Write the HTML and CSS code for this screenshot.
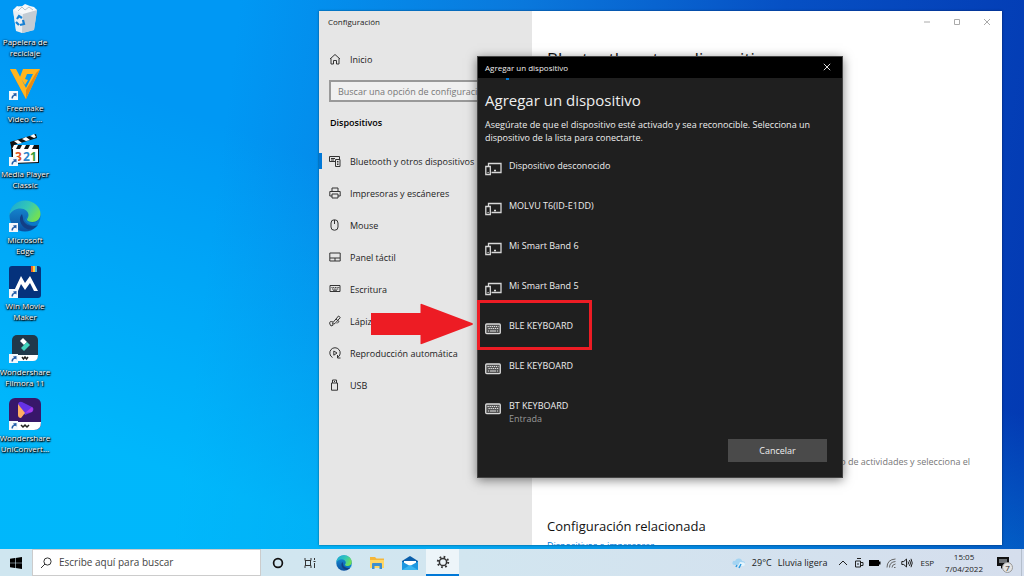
FILE: index.html
```html
<!DOCTYPE html>
<html lang="es">
<head>
  <meta charset="utf-8">
  <title>Agregar un dispositivo</title>
  <link rel="stylesheet" href="styles.css">
</head>
<body>
  <!-- Iconos que se repiten -->
  <svg class="defs" aria-hidden="true">
    <symbol id="acceso" viewBox="0 0 9 9">
      <path d="M0 0h9v9H0z" fill="#f4f8fc"/>
      <path d="M2.500 7.500C2.300 5.500 3.200 4.200 5 4L4 2.500l3.500-.5V5.500L6.300 4.800C4.700 5 4 6 4 7.500z" fill="#225ca8"/>
    </symbol>
    <symbol id="edge" viewBox="0 0 32 32">
      <linearGradient id="edgeVerde" x1="0" y1="0" x2="1" y2=".5">
        <stop offset="0" stop-color="#16a5da"/><stop offset=".6" stop-color="#35c8b5"/><stop offset="1" stop-color="#70df58"/>
      </linearGradient>
      <linearGradient id="edgeAzul" x1="0" y1="0" x2="0" y2="1">
        <stop offset="0" stop-color="#1795dc"/><stop offset="1" stop-color="#0b4f9f"/>
      </linearGradient>
      <circle cx="16" cy="16" r="15.500" fill="url(#edgeAzul)"/>
      <path d="M.5 15C1 6 8 .5 16 .5 25 .5 31.500 7 31.500 14c0 5-4 8-8 8-3.500 0-5.500-1-5.500-2.500 0-1 1.500-2 1.500-4.500 0-3.500-3.500-6.500-8-6.500-5 0-9 2.500-11 6.500z" fill="url(#edgeVerde)"/>
      <path d="M13 14c-4 4-2 12 5 15 4 1.500 8-.5 11-4-6 3-15 0-15-7z" fill="#123f86"/>
      <path d="M19 15c0 2-1.500 3.500-1.500 4.500 0 2 3 3 6 3 4 0 7.500-2.500 8.500-6L31 25c-5 2-13 0-15-5z" fill="#00a8f8" opacity=".35"/>
    </symbol>
    <symbol id="dispositivo" viewBox="0 0 17 14">
      <path d="M3.500 4V1.500h12.500v9H6.500M9 8.500h2" fill="none" stroke="#d8d8d8" stroke-width="1.300"/>
      <path d="M.8 4.500h4.500v8H.8z" fill="#1f1f1f" stroke="#d8d8d8" stroke-width="1.300"/>
      <path d="M2.500 10.500h1.200" stroke="#d8d8d8"/>
    </symbol>
    <symbol id="teclado" viewBox="0 0 17 14">
      <rect x=".7" y="2" width="14.600" height="9.600" rx="1" fill="#555" stroke="#d8d8d8" stroke-width="1.300"/>
      <path d="M2.500 4.500h11M3.500 6.500h10" stroke="#e0e0e0" stroke-width="1.200" stroke-dasharray="1.300 .8"/>
      <path d="M3 9h1M5 9h6M12 9h1" stroke="#e0e0e0"/>
    </symbol>
  </svg>

  <main class="desktop">
    <div class="shortcuts">
      <a class="shortcut" href="#">
        <svg viewBox="0 0 32 32">
          <path d="M4 8l7-4 8 1 9 3-3 20-11 3-7-3z" fill="#d3dbe2"/>
          <path d="M4 8l10 3-1 20-6-2z" fill="#e9eef2"/>
          <path d="M14 11l14-3-3 20-12 3z" fill="#c3ccd4"/>
          <path d="M4 8l4-4 4 1 4-3 5 2 4 1 3 3-14 4z" fill="#f6f8fa"/>
          <path d="M9 9l4-4 3 3 4-3 4 3" fill="none" stroke="#b8c2ca"/>
          <path d="M8 17l2-3 3 2M14 18l1 4-4 1M10 23l-3-3" fill="none" stroke="#1680d4" stroke-width="2.200"/>
        </svg>
        <span>Papelera de reciclaje</span>
      </a>
      <a class="shortcut" href="#">
        <svg viewBox="0 0 32 32">
          <path d="M1 1h5l12 22-1 8z" fill="#f07f18"/>
          <path d="M1 1h6l10 19 7-14h-6l-2 5 3 1-3 5-5-8 3-8h17L17 31z" fill="#ffb51f"/>
          <path d="M31 1L17 31v-9L27 5z" fill="#e88a12"/>
          <use href="#acceso" x="0" y="23" width="9" height="9"/>
        </svg>
        <span>Freemake Video C...</span>
      </a>
      <a class="shortcut" href="#">
        <svg viewBox="0 0 32 32">
          <path d="M1 8L27 0l1 4L2 12z" fill="#111"/>
          <path d="M5 7l4 3 4-1-4-3zM13 5l4 2 4-1-4-3zM21 2l4 2 2-1-2-3z" fill="#fff"/>
          <path d="M2 11h28v18L3 30z" fill="#111"/>
          <path d="M4 15h25v13L4 29z" fill="#fff"/>
          <path d="M5 11l-2 4h4l2-4zM13 11l-2 4h4l2-4zM21 11l-2 4h4l2-4z" fill="#fff"/>
          <text class="n321" y="27"><tspan x="6" fill="#df5520">3</tspan><tspan x="14" fill="#2c85cc">2</tspan><tspan x="21" fill="#359a35">1</tspan></text>
          <use href="#acceso" x="0" y="23" width="9" height="9"/>
        </svg>
        <span>Media Player Classic</span>
      </a>
      <a class="shortcut" href="#">
        <svg viewBox="0 0 32 32">
          <use href="#edge" width="32" height="32"/>
          <use href="#acceso" x="0" y="23" width="9" height="9"/>
        </svg>
        <span>Microsoft Edge</span>
      </a>
      <a class="shortcut" href="#">
        <svg viewBox="0 0 32 32">
          <rect width="32" height="32" rx="3" fill="#05327c"/>
          <path d="M22 0h2v6h-2z" fill="#f0602a"/><path d="M24 0h2v6h-2z" fill="#ffcd38"/><path d="M26 0h2v6h-2z" fill="#4fb6d8"/>
          <path d="M5 25l7-15 4 7 5-7 8 15h-4l-4-8-5 7-4-6-3 7z" fill="#fff"/>
          <use href="#acceso" x="0" y="23" width="9" height="9"/>
        </svg>
        <span>Win Movie Maker</span>
      </a>
      <a class="shortcut" href="#">
        <svg viewBox="0 0 32 32">
          <rect x="3" y="3" width="26" height="26" rx="5" fill="#20384a"/>
          <path d="M3 23h26q0 6-5 6H8q-5 0-5-6z" fill="#fff"/>
          <path d="M11 9l3-3 4 4-3 3z" fill="#fff"/>
          <path d="M12 16l6-6 3 3-6 6z" fill="#43d4bd"/>
          <path d="M13 25l1.500 2 1.500-2 1.500 2 1.500-2" fill="none" stroke="#222" stroke-width="1.500"/>
          <use href="#acceso" x="0" y="22" width="9" height="9"/>
        </svg>
        <span>Wondershare Filmora 11</span>
      </a>
      <a class="shortcut" href="#">
        <svg viewBox="0 0 32 32">
          <rect width="32" height="32" rx="6" fill="#38176a"/>
          <path d="M0 24h32q0 8-7 8H0z" fill="#fff"/>
          <path d="M9 6q1-3 4-2l10 5q3 2 0 5l-7 3z" fill="#6632e5"/>
          <path d="M16 15l7-6q2 2 0 5z" fill="#a83be8"/>
          <path d="M9 6l7 9-4 5q-3 0-3-3z" fill="#ffae63"/>
          <path d="M12 27l2 2 2-2 2 2 2-2" fill="none" stroke="#222" stroke-width="1.500"/>
          <use href="#acceso" x="0" y="23" width="9" height="9"/>
        </svg>
        <span>Wondershare UniConvert...</span>
      </a>
    </div>

    <!-- Ventana de Configuración -->
    <section class="settings">
      <aside class="sidebar">
        <div class="settings-title">Configuración</div>
        <a class="nav-item" href="#">
          <svg viewBox="0 0 12 12"><path d="M1 6l5-4.500L11 6M2 5.500V11h2.500V7.500h3V11H10V5.500"/></svg>
          Inicio
        </a>
        <input class="search" type="text" placeholder="Buscar una opción de configuración" aria-label="Buscar una opción de configuración">
        <h2>Dispositivos</h2>
        <nav>
          <a class="nav-item active" href="#">
            <svg viewBox="0 0 12 12"><path d="M6 6.500H.5v-5h10V4M2 3.500h4M2 5h3M6.500 4.500h4.500v7H6.500zM8 6.500h1.500M8 8h1.500M8 9.500h1.500"/></svg>
            Bluetooth y otros dispositivos
          </a>
          <a class="nav-item" href="#">
            <svg viewBox="0 0 12 12"><path d="M3 4.500V1h6v3.500M3 9H.8V4.500h10.400V9H9M3 7h6v4H3z"/></svg>
            Impresoras y escáneres
          </a>
          <a class="nav-item" href="#">
            <svg viewBox="0 0 12 12"><rect x="2" y=".8" width="7" height="10.400" rx="3.200"/><path d="M5.500 1v4"/></svg>
            Mouse
          </a>
          <a class="nav-item" href="#">
            <svg viewBox="0 0 12 12"><path d="M.8 2h10.400v8H.8zM1 7h10M6 7v3"/></svg>
            Panel táctil
          </a>
          <a class="nav-item" href="#">
            <svg viewBox="0 0 12 12"><path d="M1 2.500h10v6H1z"/><path d="M2.500 4.500h8M3 6h7" stroke-dasharray="1 .7"/><path d="M4 7.200h4"/></svg>
            Escritura
          </a>
          <a class="nav-item" href="#">
            <svg viewBox="0 0 12 12"><path d="M4 7.500L9.500 1l1.800 1.500L6 8.500l-2.500.8zM4 7Q0 5.500.8 9t3.500 1M7 4l3 2.500-2 2"/></svg>
            Lápiz y Windows Ink
          </a>
          <a class="nav-item" href="#">
            <svg viewBox="0 0 12 12"><path d="M3.500 10.500a5.200 5.200 0 1 1 5 0M8.500 8v3h3M4.800 4v4.200L8 6z"/></svg>
            Reproducción automática
          </a>
          <a class="nav-item" href="#">
            <svg viewBox="0 0 12 12"><path d="M2.500 4h6v7.200h-6zM3.500 4V1h4v3M5 2.500h1"/></svg>
            USB
          </a>
        </nav>
      </aside>
      <div class="content">
        <div class="window-buttons">
          <button aria-label="Minimizar"><svg viewBox="0 0 8 8"><path d="M1 4h6"/></svg></button>
          <button aria-label="Maximizar"><svg viewBox="0 0 8 8"><path d="M1.500 1.500h5v5h-5z"/></svg></button>
          <button aria-label="Cerrar"><svg viewBox="0 0 8 8"><path d="M1 1l6 6M7 1L1 7"/></svg></button>
        </div>
        <h1>Bluetooth y otros dispositivos</h1>
        <div class="related">
          <p>Para activar o desactivar Bluetooth sin abrir Configuración, abre Centro de actividades y selecciona el icono Bluetooth.</p>
          <h3>Configuración relacionada</h3>
          <a href="#">Dispositivos e impresoras</a>
        </div>
      </div>
    </section>

    <!-- Cuadro para agregar el dispositivo -->
    <section class="dialog" role="dialog" aria-labelledby="titulo">
      <div class="dialog-bar">
        <span>Agregar un dispositivo</span>
        <button aria-label="Cerrar"><svg viewBox="0 0 8 8"><path d="M.8.8l6.400 6.400M7.200.8L.8 7.200"/></svg></button>
      </div>
      <div class="progress"></div>
      <div class="dialog-body">
        <h2 id="titulo">Agregar un dispositivo</h2>
        <p>Asegúrate de que el dispositivo esté activado y sea reconocible. Selecciona un dispositivo de la lista para conectarte.</p>
        <div class="devices">
          <button class="device"><svg><use href="#dispositivo"/></svg><span>Dispositivo desconocido</span></button>
          <button class="device"><svg><use href="#dispositivo"/></svg><span>MOLVU T6(ID-E1DD)</span></button>
          <button class="device"><svg><use href="#dispositivo"/></svg><span>Mi Smart Band 6</span></button>
          <button class="device"><svg><use href="#dispositivo"/></svg><span>Mi Smart Band 5</span></button>
          <button class="device marked"><svg><use href="#teclado"/></svg><span>BLE KEYBOARD</span></button>
          <button class="device"><svg><use href="#teclado"/></svg><span>BLE KEYBOARD</span></button>
          <button class="device"><svg><use href="#teclado"/></svg><span>BT KEYBOARD<small>Entrada</small></span></button>
        </div>
        <button class="cancel">Cancelar</button>
      </div>
    </section>

    <svg class="arrow" viewBox="0 0 103 42"><path d="M0 10h50V1q0-1 2 0l50 19q2 1 0 2L52 41q-2 1-2 0v-9H0z" fill="#ed1c24"/></svg>
  </main>

  <footer class="taskbar">
    <button class="start" aria-label="Inicio">
      <svg viewBox="0 0 12 12"><path d="M0 1.800l5-.7v4.600H0zM5.600 1L12 0v5.700H5.600zM0 6.300h5v4.600l-5-.7zM5.600 6.300H12V12l-6.400-1z" fill="#000"/></svg>
    </button>
    <label class="task-search">
      <svg viewBox="0 0 12 12"><circle cx="7.500" cy="4.500" r="3.600"/><path d="M5 7L1 11"/></svg>
      <input type="text" placeholder="Escribe aquí para buscar" aria-label="Escribe aquí para buscar">
    </label>
    <button class="task" aria-label="Cortana"><svg viewBox="0 0 16 16"><circle cx="8" cy="8" r="4.400" fill="none" stroke="#111" stroke-width="1.700"/></svg></button>
    <button class="task" aria-label="Vista de tareas"><svg viewBox="0 0 16 16"><path d="M2 3v2.500h6V3M2 13v-2.500h6V13M2.500 5.500v5M7.500 5.500v5M11.500 3v2M11.500 8v5M10.500 6.500h2" fill="none" stroke="#333"/></svg></button>
    <button class="task" aria-label="Microsoft Edge"><svg><use href="#edge"/></svg></button>
    <button class="task" aria-label="Explorador de archivos">
      <svg viewBox="0 0 16 16"><path d="M1 2h5l1.500 1.500H15V13H1z" fill="#f5b73a"/><path d="M1 5h14v8H1z" fill="#ffd766"/><path d="M3 14V9q0-1 1-1h8q1 0 1 1v5h-2.500v-3h-5v3z" fill="#3d8fd0"/></svg>
    </button>
    <button class="task" aria-label="Correo">
      <svg viewBox="0 0 16 16"><path d="M0 6l8-5 8 5v9H0z" fill="#0b5faa"/><path d="M2 6h12v5H2z" fill="#fff"/><path d="M0 6.500l8 4.500 8-4.500V15H0z" fill="#1c97e0"/><path d="M0 15l8-5 8 5z" fill="#39b5f0"/></svg>
    </button>
    <button class="task current" aria-label="Configuración">
      <svg viewBox="0 0 16 16"><circle cx="8" cy="8" r="3.600" fill="none" stroke="#333" stroke-width="1.500"/><circle cx="8" cy="8" r="5.200" fill="none" stroke="#333" stroke-width="2" stroke-dasharray="1.700 2.384"/></svg>
    </button>

    <div class="tray">
      <button class="weather">
        <svg viewBox="0 0 14 12"><path d="M3 8Q0 8 .5 5.500T3 4Q4 1 7 1.500T10 4q3 0 3 2t-3 2z" fill="#a4d4f2"/><path d="M8 5q5 0 5 2t-2 2H6z" fill="#e6f5fd"/><path d="M5 8l-1 2M9 7l-2 4" stroke="#2d9be0" stroke-width="1.500"/></svg>
        <span>29°C</span><span>Lluvia ligera</span>
      </button>
      <div class="status">
        <svg viewBox="0 0 12 12"><path d="M2 8l4-4 4 4"/></svg>
        <svg viewBox="0 0 12 12"><path d="M2.500 4h5v6h-5zM7.500 5.500H10v3H7.500M4 1.500h4M4 7h2"/></svg>
        <svg viewBox="0 0 12 12"><path d="M0 3h10v1.500h1.500v3H10V9H0z" fill="#000" stroke="none"/></svg>
        <svg viewBox="0 0 12 12"><path d="M2 10.500Q2 2.500 10.500 2M4.500 10.500Q4.500 5 10.500 4.500M7 10.500Q7 7.500 10.500 7M9 10.500h1.500" stroke="#666"/></svg>
        <svg viewBox="0 0 12 12"><path d="M.8 4.500h2L5.500 2v8L2.800 7.500h-2zM7 4.500q1 1.500 0 3M8.500 3q2 3 0 6M10 1.800q2.500 4.200 0 8.400"/></svg>
      </div>
      <span class="lang">ESP</span>
      <div class="clock"><span>15:05</span><span>7/04/2022</span></div>
      <button class="notices" aria-label="Notificaciones">
        <svg viewBox="0 0 12 12"><path d="M0 0h12v9H6.500L4 12V9H0z" fill="#111"/><path d="M2 3h8M2 5h8" stroke="#ccd4dc"/></svg>
        <span class="badge">7</span>
      </button>
    </div>
  </footer>
</body>
</html>
```

FILE: styles.css
```css
* {
  box-sizing: border-box;
}

body {
  margin: 0;
  height: 100vh;
  display: flex;
  flex-direction: column;
  overflow: hidden;
  font-family: "Open Sans", "Noto Sans", sans-serif;
  font-size: 9px;
  line-height: 13px;
  color: #222;
}

h1, h2, h3, p {
  margin: 0;
  font-weight: normal;
}

a {
  color: inherit;
  text-decoration: none;
}

button, input {
  font: inherit;
  color: inherit;
  border: none;
  padding: 0;
  background: none;
}

svg {
  flex: none;
}

.defs {
  position: absolute;
  width: 0;
  height: 0;
}

/* Escritorio */
.desktop {
  position: relative;
  flex: 1;
  min-height: 0;
  background:
    linear-gradient(195deg, transparent 35%, rgba(0, 195, 255, 0.6) 90%),
    linear-gradient(97deg, #0096f2 0%, #0098f4 22%, #0a78dc 48%, #0650c4 72%, #0339b2 88%);
  background:
    linear-gradient(200deg, transparent 45%, rgba(0, 200, 255, 0.65) 85%),
    linear-gradient(97deg, #0098f4 0%, #0098f4 22%, #0a78dc 48%, #0650c4 72%, #0339b2 100%);
}

.shortcuts {
  display: flex;
  flex-direction: column;
  gap: 10px;
  width: 50px;
  padding-top: 2px;
}

.shortcut {
  display: flex;
  flex-direction: column;
  align-items: center;
  gap: 2px;
  font-size: 8px;
  line-height: 11px;
  text-align: center;
  color: #fff;
  text-shadow: 0 1px 2px #000, 0 0 2px #000, 1px 1px 1px #000;
}

.shortcut svg {
  width: 32px;
  height: 32px;
}

.n321 {
  font-size: 12px;
  font-weight: bold;
  text-shadow: none;
}

/* Configuración */
.settings {
  position: absolute;
  top: 11px;
  left: 319px;
  right: 22px;
  bottom: 4px;
  display: flex;
  overflow: hidden;
  background: #fff;
  box-shadow: 0 0 2px rgba(0, 0, 0, 0.5);
}

.sidebar {
  width: 213px;
  background: #e6e6e6;
}

.settings-title {
  padding: 4px 9px 15px;
  font-size: 8px;
}

.nav-item {
  display: flex;
  align-items: center;
  gap: 9px;
  height: 32px;
  padding-left: 10px;
  white-space: nowrap;
}

.nav-item svg {
  width: 12px;
  height: 12px;
  fill: none;
  stroke: #333;
}

.nav-item.active {
  background: linear-gradient(#0078d7, #0078d7) left center / 3px 16px no-repeat;
}

.search {
  display: block;
  width: 192px;
  height: 22px;
  margin: 5px 10px 0;
  padding: 0 7px;
  border: 2px solid #999;
  background: #f0f0f0;
}

.search::placeholder {
  color: #777;
  opacity: 1;
}

.sidebar h2 {
  padding: 14px 11px 16px;
  font-size: 9px;
  font-weight: 600;
  color: #000;
}

.content {
  flex: 1;
  display: flex;
  flex-direction: column;
  padding-left: 15px;
}

.window-buttons {
  display: flex;
  justify-content: flex-end;
  height: 22px;
}

.window-buttons button {
  width: 30px;
}

.window-buttons svg, .dialog-bar svg {
  width: 8px;
  height: 8px;
  fill: none;
  stroke: #aaa;
}

.content h1 {
  margin-top: 14px;
  font-size: 17px;
  line-height: 24px;
  color: #111;
}

.related {
  margin-top: auto;
  height: 90px;
}

.related p {
  max-width: 430px;
  color: #777;
}

.related h3 {
  margin-top: 35px;
  font-size: 13px;
  line-height: 20px;
  color: #111;
}

.related a {
  display: block;
  margin-top: 3px;
  color: #0078d7;
}

/* Agregar un dispositivo */
.dialog {
  position: absolute;
  top: 56px;
  left: 477px;
  right: 181px;
  border: 1px solid #444;
  background: #1f1f1f;
  color: #eee;
  box-shadow: 0 2px 10px rgba(0, 0, 0, 0.5);
}

.dialog-bar {
  display: flex;
  align-items: center;
  justify-content: space-between;
  height: 21px;
  padding-left: 7px;
  background: #000;
  font-size: 8px;
}

.dialog-bar button {
  width: 30px;
}

.dialog-bar svg {
  stroke: #ddd;
}

.progress {
  width: 3px;
  height: 2px;
  margin-left: 28px;
  background: #0078d7;
}

.dialog-body {
  display: flex;
  flex-direction: column;
  padding: 9px 15px 15px 7px;
}

.dialog h2 {
  font-size: 15px;
  line-height: 22px;
}

.dialog p {
  margin-top: 7px;
}

.devices {
  margin-top: 15px;
}

.device {
  display: flex;
  align-items: flex-start;
  gap: 7px;
  width: 100%;
  height: 40px;
  text-align: left;
}

.device svg {
  width: 17px;
  height: 14px;
  margin-top: 3px;
}

.device small {
  display: block;
  font-size: 9px;
  color: #999;
}

.device.marked {
  position: relative;
}

.device.marked::after {
  content: "";
  position: absolute;
  top: -19px;
  left: -8px;
  width: 109px;
  height: 44px;
  border: 3px solid #ed1c24;
}

.cancel {
  align-self: flex-end;
  width: 99px;
  height: 23px;
  background: #4a4a4a;
}

.arrow {
  position: absolute;
  top: 303px;
  left: 371px;
  width: 102px;
  height: 42px;
}

/* Barra de tareas */
.taskbar {
  display: flex;
  height: 27px;
  background: linear-gradient(90deg, #cfe6f0, #d2e6f0 45%, #d5deed);
}

.start {
  display: flex;
  align-items: center;
  justify-content: center;
  width: 32px;
}

.start svg, .task-search svg {
  width: 12px;
  height: 12px;
}

.task-search {
  display: flex;
  align-items: center;
  gap: 7px;
  width: 229px;
  padding-left: 7px;
  border: 1px solid #ccc;
  background: #fff;
}

.task-search svg {
  fill: none;
  stroke: #333;
}

.task-search input {
  flex: 1;
  font-size: 10px;
}

.task-search input::placeholder {
  color: #444;
  opacity: 1;
}

.task {
  display: flex;
  align-items: center;
  justify-content: center;
  width: 33px;
}

.task svg {
  width: 16px;
  height: 16px;
}

.task.current {
  background: #edf5f9;
  border-bottom: 2px solid #0078d7;
}

.tray {
  display: flex;
  align-items: center;
  margin-left: auto;
  border-right: 1px solid #b5bfcc;
  margin-right: 2px;
}

.weather {
  display: flex;
  align-items: center;
  gap: 6px;
}

.weather svg {
  width: 14px;
  height: 12px;
}

.status {
  display: flex;
  gap: 4px;
  margin-left: 10px;
}

.status svg {
  width: 12px;
  height: 12px;
  fill: none;
  stroke: #222;
}

.lang {
  margin-left: 7px;
  font-size: 8px;
}

.clock {
  display: flex;
  flex-direction: column;
  margin-left: 11px;
  font-size: 8px;
  line-height: 12px;
  text-align: center;
}

.notices {
  position: relative;
  display: flex;
  margin: 0 12px 0 14px;
}

.notices svg {
  width: 12px;
  height: 12px;
}

.badge {
  position: absolute;
  top: 5px;
  left: 5px;
  width: 11px;
  height: 11px;
  border: 1px solid #999;
  border-radius: 50%;
  background: #e4e4e4;
  font-size: 8px;
  line-height: 9px;
  text-align: center;
}
```
